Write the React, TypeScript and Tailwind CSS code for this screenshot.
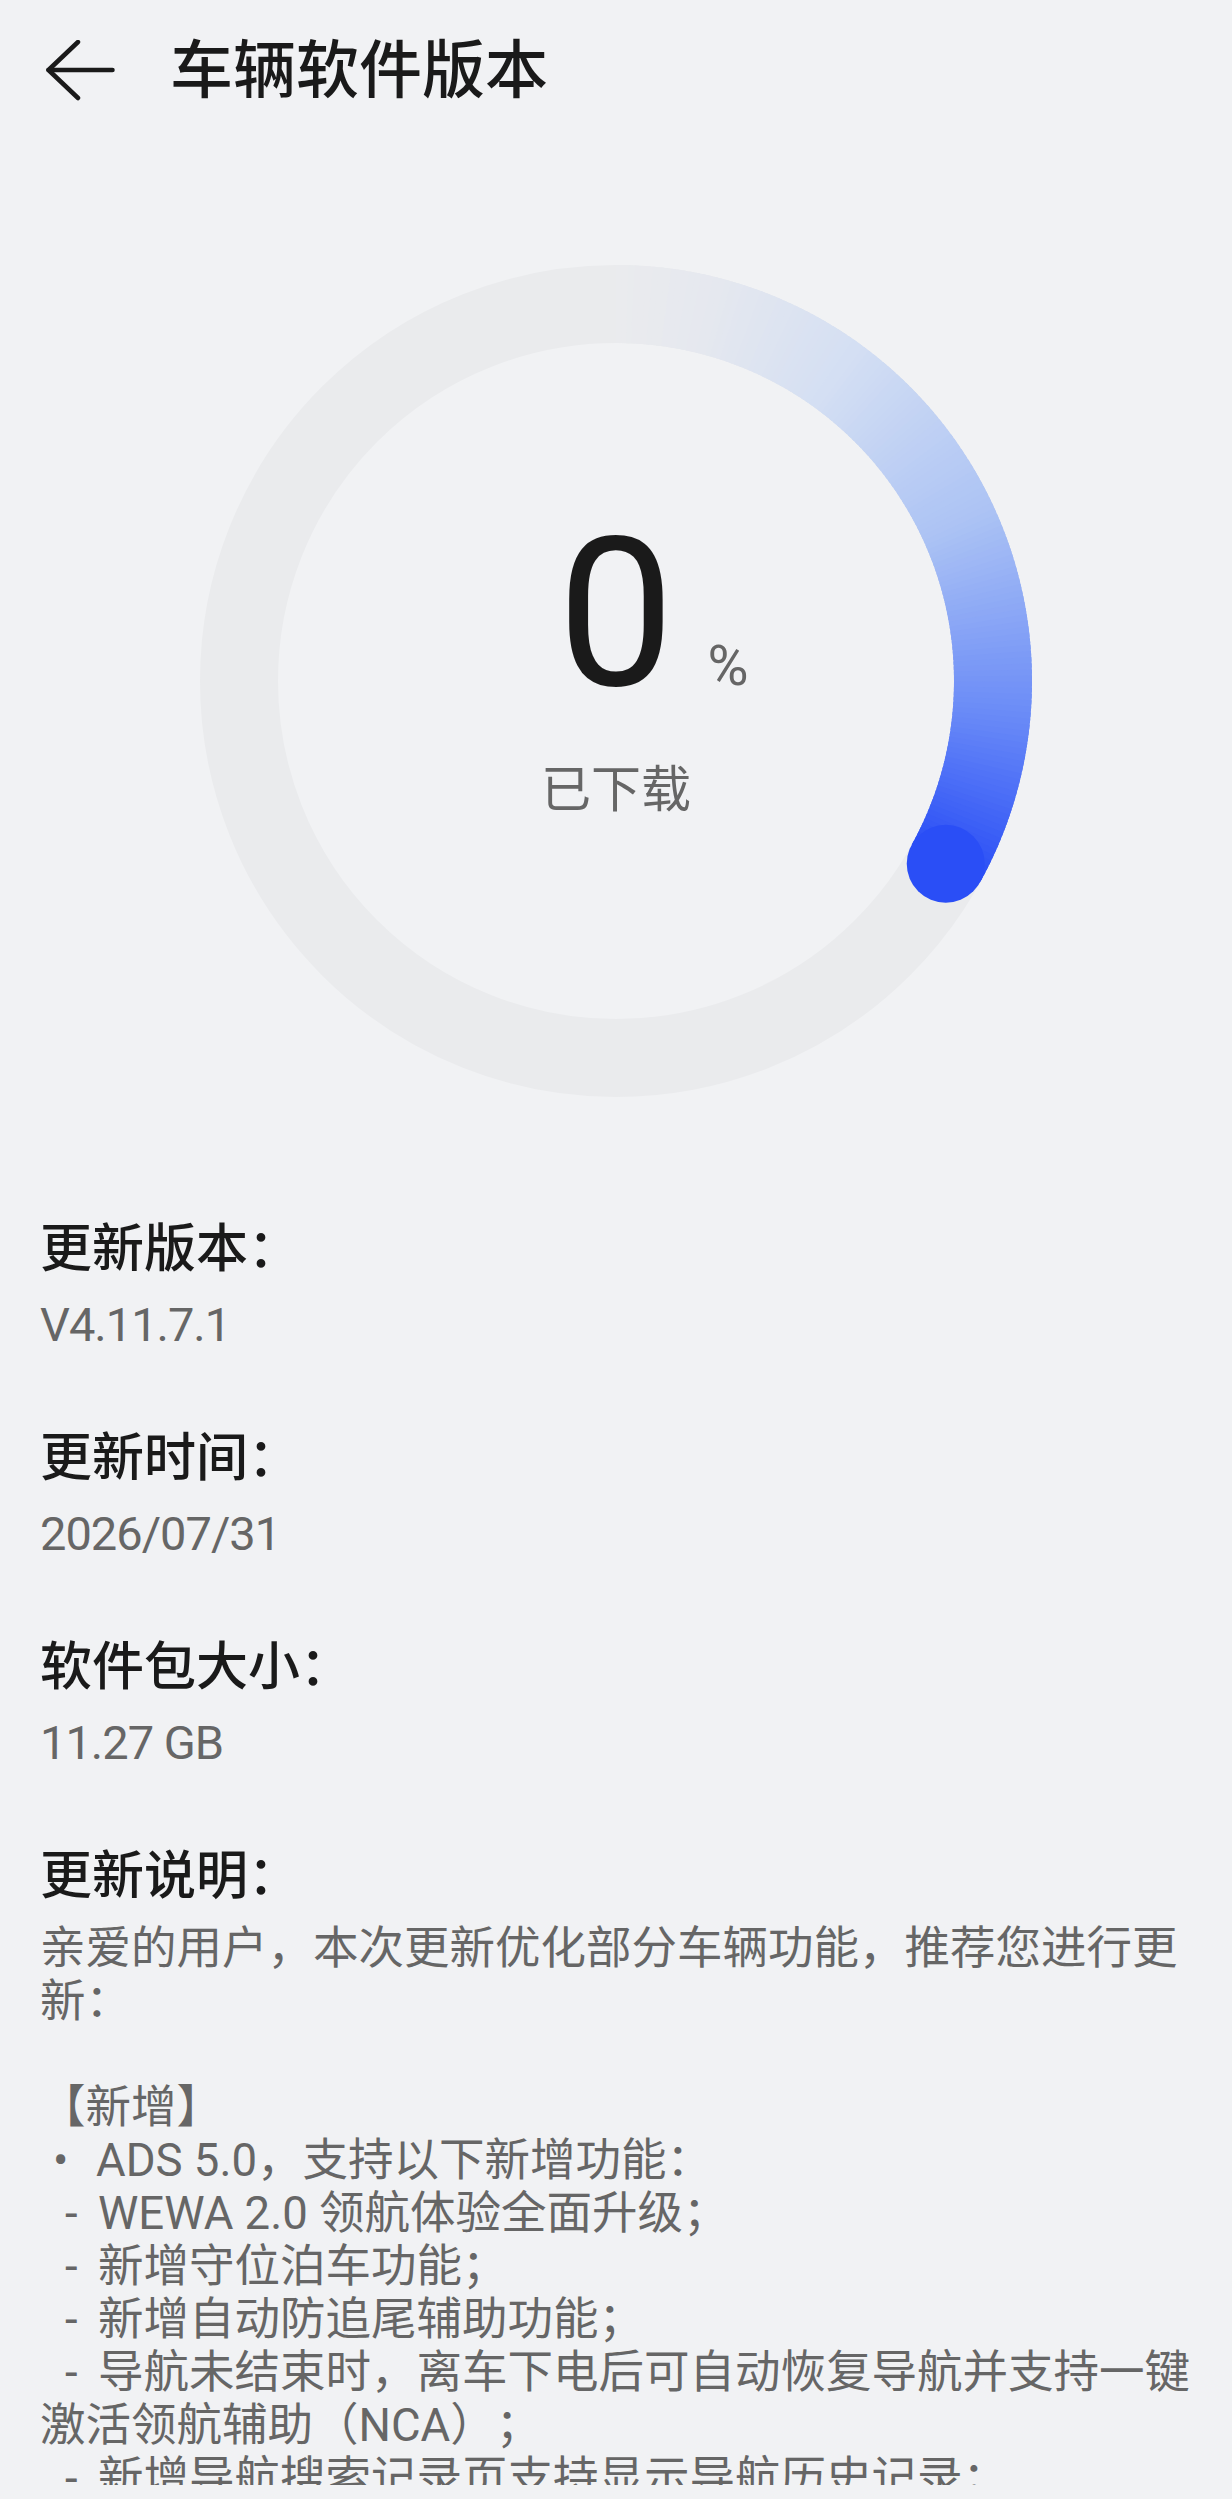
import React from "react";

const C = 416;
const R = 377;
const END = 119;
const N = 140;

const stops: [number, number, number, number][] = [
    [0, 234, 235, 238],
    [0.12, 229, 232, 239],
    [0.3, 212, 223, 243],
    [0.55, 172, 195, 244],
    [0.8, 106, 139, 247],
    [1, 42, 78, 246],
];

const colorAt = (t: number) => {
    for (let i = 1; i < stops.length; i++) {
        const [t1, r1, g1, b1] = stops[i];
        const [t0, r0, g0, b0] = stops[i - 1];
        if (t <= t1) {
            const k = (t - t0) / (t1 - t0);
            return `rgb(${Math.round(r0 + (r1 - r0) * k)},${Math.round(g0 + (g1 - g0) * k)},${Math.round(b0 + (b1 - b0) * k)})`;
        }
    }
    return "rgb(42,78,246)";
};

const pt = (deg: number) => {
    const a = ((deg - 90) * Math.PI) / 180;
    return [C + R * Math.cos(a), C + R * Math.sin(a)];
};

const ProgressRing = () => {
    const segs = [];
    for (let i = 0; i < N; i++) {
        const a0 = (END * i) / N;
        const a1 = Math.min(END, (END * (i + 1)) / N + 0.6);
        const [x0, y0] = pt(a0);
        const [x1, y1] = pt(a1);
        segs.push(
            <path
                key={i}
                d={`M ${x0} ${y0} A ${R} ${R} 0 0 1 ${x1} ${y1}`}
                stroke={colorAt(i / (N - 1))}
                strokeWidth={78}
                fill="none"
            />
        );
    }
    const [ex, ey] = pt(END);
    return (
        <svg className="absolute inset-0" width="832" height="832" viewBox="0 0 832 832">
            <circle cx={C} cy={C} r={R} stroke="#eaebed" strokeWidth={78} fill="none" />
            {segs}
            <circle cx={ex} cy={ey} r={39} fill="rgb(42,78,246)" />
        </svg>
    );
};

const Section = ({ label, value }: { label: string; value: string }) => (
    <div className="mb-[71px]">
        <div className="h-[60px] leading-[60px] text-[52px] font-medium text-[#1a1a1a]">{label}</div>
        <div className="mt-[22px] h-[56px] leading-[56px] text-[47px] tracking-[-1px] text-[#666666] font-['Roboto','Noto_Sans_CJK_SC',sans-serif]">
            {value}
        </div>
    </div>
);

const Dash = () => <span className="inline-block w-[58px] pl-[25px]">-</span>;

export default function App() {
    return (
        <div className="w-full h-[2499px] bg-[#f1f2f4] font-['Noto_Sans_CJK_SC',sans-serif] [text-spacing-trim:space-all]">
            <div className="h-[2485px] overflow-hidden">
                <header className="flex items-center h-[142px] pl-[46px]">
                    <svg width="70" height="62" viewBox="0 0 70 62" fill="none" stroke="#1a1a1a" strokeWidth="4.5" strokeLinecap="round" strokeLinejoin="round">
                        <path d="M2.5 30 H66.5" />
                        <path d="M32 2 L2.5 30 L32 58" />
                    </svg>
                    <h1 className="ml-[54px] mb-[12px] text-[63px] leading-[72px] font-medium text-[#1a1a1a]">
                        车辆软件版本
                    </h1>
                </header>

                <section className="flex justify-center mt-[123px]">
                    <div className="relative w-[832px] h-[832px]">
                        <ProgressRing />
                        <div className="relative flex flex-col items-center pt-[245px]">
                            <div className="grid grid-cols-[1fr_auto_1fr] items-baseline w-full">
                                <span />
                                <span className="text-[208px] leading-none text-[#1a1a1a] font-['Roboto',sans-serif]">0</span>
                                <span className="pl-[33px] text-[56px] leading-none text-[#666666] font-['Roboto',sans-serif]">%</span>
                            </div>
                            <div className="mt-[42px] text-[50px] leading-none text-[#666666]">已下载</div>
                        </div>
                    </div>
                </section>

                <div className="pl-[40px] pr-[24px] mt-[118px]">
                    <Section label="更新版本：" value="V4.11.7.1" />
                    <Section label="更新时间：" value="2026/07/31" />
                    <Section label="软件包大小：" value="11.27 GB" />

                    <div className="h-[60px] leading-[60px] text-[52px] font-medium text-[#1a1a1a]">更新说明：</div>
                    <div className="mt-[20px] text-[45.5px] leading-[53px] text-[#666666] font-['Roboto','Noto_Sans_CJK_SC',sans-serif]">
                        <p>亲爱的用户，本次更新优化部分车辆功能，推荐您进行更新：</p>
                        <p className="h-[53px]" />
                        <p>【新增】</p>
                        <p>
                            <span className="inline-block w-[56px] pl-[13px]">•</span>ADS 5.0，支持以下新增功能：
                        </p>
                        <p>
                            <Dash />WEWA 2.0 领航体验全面升级；
                        </p>
                        <p>
                            <Dash />新增守位泊车功能；
                        </p>
                        <p>
                            <Dash />新增自动防追尾辅助功能；
                        </p>
                        <p>
                            <Dash />导航未结束时，离车下电后可自动恢复导航并支持一键激活领航辅助（NCA）；
                        </p>
                        <p>
                            <Dash />新增导航搜索记录页支持显示导航历史记录；
                        </p>
                        <p>
                            <Dash />新增智能泊车辅助场景；
                        </p>
                    </div>
                </div>
            </div>
        </div>
    );
}
